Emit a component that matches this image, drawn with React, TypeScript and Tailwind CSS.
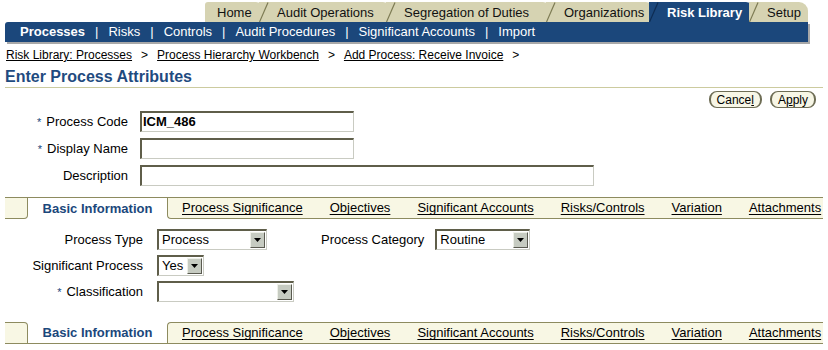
import React from "react";

const topTabs = [
  { label: "Home", w: 60 },
  { label: "Audit Operations", w: 127 },
  { label: "Segregation of Duties", w: 160 },
  { label: "Organizations", w: 103 },
  { label: "Risk Library", w: 100, active: true },
  { label: "Setup", w: 53 },
];

const subNav = ["Processes", "Risks", "Controls", "Audit Procedures", "Significant Accounts", "Import"];

const subTabs = ["Process Significance", "Objectives", "Significant Accounts", "Risks/Controls", "Variation", "Attachments"];

function TopTab({ label, w, active, first }: { label: string; w: number; active?: boolean; first: boolean }) {
  const bg = active ? "#1b477b" : "#d6d3b2";
  return (
    <div
      className={`relative flex h-[20px] items-center rounded-tr-[9px] ${first ? "rounded-tl-[3px] pl-[12px]" : "-ml-[6px] pl-[18px]"} ${active ? "bg-[#1b477b] font-bold text-white" : "bg-[#d6d3b2] text-[#111]"}`}
      style={{ width: first ? w : w + 6 }}
    >
      {!first && (
        <svg className="absolute left-0 top-0" width="10" height="20" viewBox="0 0 10 20">
          <polygon points="0,20 9,0 10,0 10,20" fill={bg} />
          <line x1="0.5" y1="20" x2="9" y2="0.5" stroke={active ? "#0e2c52" : "#7c7a52"} strokeWidth="1.2" />
        </svg>
      )}
      <span className="relative text-[13px] leading-none">{label}</span>
    </div>
  );
}

function TextInput({ w, value }: { w: number; value?: string }) {
  return (
    <div
      className="flex h-[21px] items-center border border-t-[2px] border-l-[2px] border-t-[#5f5e4a] border-l-[#5f5e4a] border-r-[#c9cbc2] border-b-[#c9cbc2] bg-white pl-[1px] text-[13px] font-bold text-black"
      style={{ width: w }}
    >
      {value}
    </div>
  );
}

function Select({ w, value }: { w: number; value?: string }) {
  return (
    <div
      className="flex h-[21px] items-stretch border border-t-[2px] border-l-[2px] border-t-[#5f5e4a] border-l-[#5f5e4a] border-r-[#c9cbc2] border-b-[#c9cbc2] bg-white"
      style={{ width: w }}
    >
      <div className="flex flex-1 items-center pl-[3px] text-[13px] text-black">{value}</div>
      <div className="m-[1px] flex w-[15px] items-center justify-center border border-t-[#eef0e8] border-l-[#eef0e8] border-r-[#5a5a50] border-b-[#5a5a50] bg-[#c6cbc1]">
        <svg width="7" height="4" viewBox="0 0 7 4">
          <polygon points="0,0 7,0 3.5,4" fill="#000" />
        </svg>
      </div>
    </div>
  );
}

function Req() {
  return <span className="mr-[5px] text-[11px] text-[#1b477b]">*</span>;
}

function TabBar({ bottom }: { bottom?: boolean }) {
  return (
    <div className="mx-[5px] flex h-[22px] items-stretch">
      <div
        className={`w-[23px] border-[#8d8b5f] bg-[#f8f7e4] ${bottom ? "rounded-tr-[4px] border-t border-r border-b" : "rounded-br-[4px] border-t border-r border-b"}`}
      />
      <div
        className={`flex w-[139px] items-center justify-center border-[#8d8b5f] bg-white text-[13px] font-bold text-[#1b477b] ${bottom ? "border-b" : "border-t"}`}
      >
        Basic Information
      </div>
      <div
        className={`flex flex-1 items-center gap-[27px] border-[#8d8b5f] bg-[#f8f7e4] pl-[14px] text-[13px] text-black ${bottom ? "rounded-tl-[4px] border-t border-l border-b" : "rounded-bl-[4px] border-t border-l border-b"}`}
      >
        {subTabs.map((t) => (
          <span key={t} className="underline underline-offset-2">
            {t}
          </span>
        ))}
      </div>
    </div>
  );
}

export default function App() {
  return (
    <div className="h-[350px] w-[828px] overflow-hidden bg-white text-black" style={{ fontFamily: '"Liberation Sans", Arial, sans-serif' }}>
      {/* top tabs */}
      <div className="flex justify-end pr-[20px] pt-[2px]">
        {topTabs.map((t, i) => (
          <TopTab key={t.label} label={t.label} w={t.w} active={t.active} first={i === 0} />
        ))}
      </div>

      {/* sub nav */}
      <div className="ml-[5px] flex h-[20px] w-[803px] items-center gap-[9px] rounded-tl-[3px] bg-[#1b477b] pl-[15px] text-[13px] text-white shadow-[2px_2px_0_#a8a8a8]">
        {subNav.map((s, i) => (
          <React.Fragment key={s}>
            {i > 0 && <span className="px-[1px]">|</span>}
            <span className={i === 0 ? "font-bold" : ""}>{s}</span>
          </React.Fragment>
        ))}
      </div>

      {/* breadcrumbs */}
      <div className="mt-[6px] flex items-center gap-[9px] pl-[6px] text-[12px] leading-[14px]">
        <span className="underline">Risk Library: Processes</span>
        <span>&gt;</span>
        <span className="underline">Process Hierarchy Workbench</span>
        <span>&gt;</span>
        <span className="underline">Add Process: Receive Invoice</span>
        <span>&gt;</span>
      </div>

      {/* title */}
      <div className="mx-[5px] mt-[5px] border-b border-[#cccb9f] pb-[1px] text-[16px] font-bold leading-[19px] text-[#1f4b7f]">
        Enter Process Attributes
      </div>

      {/* buttons */}
      <div className="mt-[3px] flex justify-end gap-[8px] pr-[12px]">
        <button className="flex h-[17px] items-center rounded-[8px] border border-[#6e6d55] border-l-[2px] border-r-[2px] bg-[#f7f6e6] px-[6px] text-[12px] leading-none text-black">
          Cance<span className="underline">l</span>
        </button>
        <button className="flex h-[17px] items-center rounded-[8px] border border-[#6e6d55] border-l-[2px] border-r-[2px] bg-[#f7f6e6] px-[6px] text-[12px] leading-none text-black">
          A<span className="underline">p</span>ply
        </button>
      </div>

      {/* main form */}
      <div className="mt-[3px] grid grid-cols-[128px_auto] items-center gap-x-[12px] gap-y-[6px] text-[13px]">
        <div className="text-right">
          <Req />
          Process Code
        </div>
        <TextInput w={214} value="ICM_486" />
        <div className="text-right">
          <Req />
          Display Name
        </div>
        <TextInput w={214} />
        <div className="text-right">Description</div>
        <TextInput w={454} />
      </div>

      <div className="mt-[11px]">
        <TabBar />
      </div>

      {/* basic info form */}
      <div className="mt-[10px] flex text-[13px]">
        <div className="grid grid-cols-[143px_auto] items-center gap-x-[14px] gap-y-[5px]">
          <div className="text-right">Process Type</div>
          <Select w={110} value="Process" />
          <div className="text-right">Significant Process</div>
          <Select w={47} value="Yes" />
          <div className="text-right">
            <Req />
            Classification
          </div>
          <Select w={137} />
        </div>
        <div className="ml-[27px] flex h-[21px] items-center gap-[11px]">
          <span>Process Category</span>
          <Select w={95} value="Routine" />
        </div>
      </div>

      <div className="mt-[20px]">
        <TabBar bottom />
      </div>
    </div>
  );
}
